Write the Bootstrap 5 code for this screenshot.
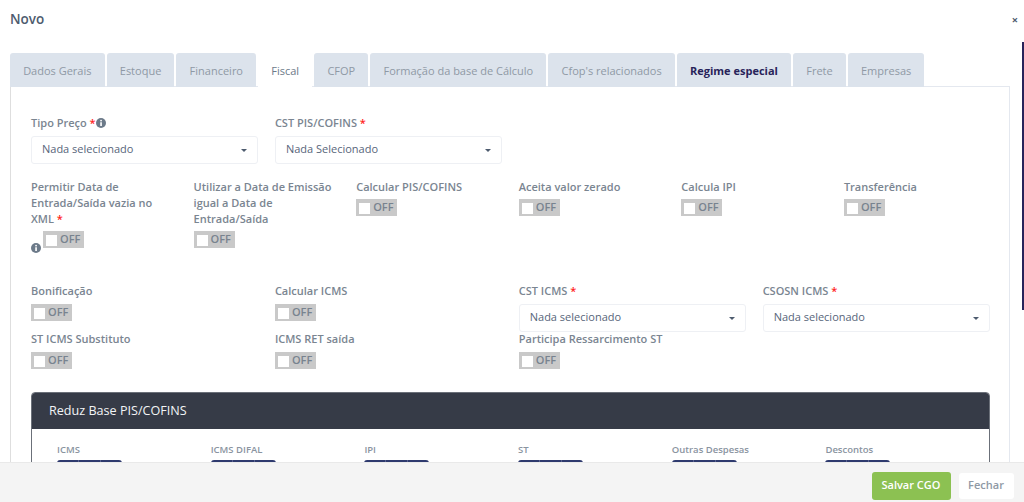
<!DOCTYPE html>
<html lang="pt">
<head>
<meta charset="utf-8">
<link rel="stylesheet" href="https://cdn.jsdelivr.net/npm/bootstrap@5.3.0/dist/css/bootstrap.min.css">
<style>
html,body{height:100%;overflow:hidden}
body{font-family:"Open Sans",sans-serif;font-size:11px;color:#6c7a89;background:#fff}
.shell{height:502px;display:flex;flex-direction:column}
.topbar{height:53px;flex:none;padding:10px 6px 0 10px;display:flex;justify-content:space-between;align-items:flex-start}
.ttl{font-size:13.5px;font-weight:600;color:#4d5b6e;line-height:19px}
.shut{font-size:11px;font-weight:700;color:#4d5b6e;line-height:19px}
.scrollarea{flex:1 1 auto;min-height:0;overflow:hidden;padding:0 14px 0 10px}
.tabrow{gap:2px;border:0;height:34px;flex-wrap:nowrap}
.tabrow .nav-link{height:34px;border:0;border-radius:3px 3px 0 0;background:#dce3ec;color:#8f99a5;padding:0 13.15px;line-height:35px;font-size:11px;white-space:nowrap}
.tabrow .nav-link.active{background:#fff;color:#6c7a89;position:relative;z-index:2}
.tabrow .nav-link.strong{font-weight:700;color:#28235a}
.pane{border:1px solid #e4e8ef;border-left-color:#dedede;margin-top:-1px;padding:28px 19px 0 20px;height:500px}
.gridrow{--bs-gutter-x:17px;width:975.5px}
.lbl{display:block;line-height:16px;margin-bottom:5px;color:#7a8591;font-weight:600;font-size:11px}
.req{color:#f22;font-weight:600}
.info{display:inline-block;width:10px;height:10px;vertical-align:-1px}
.drop{height:28px;border:1px solid #eef0f4;border-radius:3px;padding:0 10px 2px 10px;display:flex;justify-content:space-between;align-items:center;color:#57657a;font-size:11px}
.drop::after{content:"";border:3.5px solid transparent;border-top-color:#4d5b6e;border-bottom:0;margin-top:2px}
.sw{display:inline-flex;align-items:center;width:41px;height:17px;background:#c9c9c9;padding:0 3px;color:#78838f;font-weight:600;font-size:11px;line-height:14px;vertical-align:top;flex:none}
.sw::before{content:"";width:11px;height:11px;background:#fff;margin:1px 3px 0 0;flex:none}
.sw span{margin-top:-2px}
.r1{margin-top:15px;height:104px}
.r1 .lbl{margin-bottom:4px}
.r2{height:48px}
.r3{height:61px}
.infogap{margin-top:12px;margin-right:2px}
.panel{width:959px;border:1px solid #6b7079;border-radius:4px 4px 0 0;height:120px}
.panelhead{height:36px;background:#363b47;color:#f2f4f6;padding:0 17px;line-height:36px;font-size:12.6px;font-weight:400;border-radius:3px 3px 0 0}
.panelbody{padding:14px 0 0 25px}
.cell{width:153.7px;flex:none}
.cell label{display:block;font-size:9.5px;font-weight:600;color:#8a949f;line-height:14px;margin-bottom:3px}
.stepper{width:65px;height:20px;background:#2e3a6e;border-radius:3px;display:flex}
.stepper i{flex:1;border-right:1px solid #5a6390}
.bottombar{height:40px;flex:none;background:#f4f4f4;border-top:1px solid #e9e9e9;display:flex;justify-content:flex-end;align-items:center;gap:7px;padding:6px 10.5px 0 0;position:relative;z-index:3}
.btn-save{background:#8cc152;border:0;color:#fff;font-size:11px;font-weight:600;height:28px;width:79px;padding:0;border-radius:3px;margin-right:1px}
.btn-close-txt{background:#fff;border:0;color:#8f99a5;font-size:11px;font-weight:600;height:26px;width:55px;padding:0;border-radius:3px}
.rail{position:absolute;right:0;top:42px;width:2px;height:268px;background:#28235a}
</style>
</head>
<body>
<div class="shell position-relative">
  <div class="rail"></div>
  <div class="topbar"><div class="ttl">Novo</div><div class="shut">×</div></div>
  <div class="scrollarea">
    <ul class="nav nav-tabs tabrow">
      <li class="nav-item"><a class="nav-link" href="#">Dados Gerais</a></li>
      <li class="nav-item"><a class="nav-link" href="#">Estoque</a></li>
      <li class="nav-item"><a class="nav-link" href="#">Financeiro</a></li>
      <li class="nav-item"><a class="nav-link active" href="#">Fiscal</a></li>
      <li class="nav-item"><a class="nav-link" href="#">CFOP</a></li>
      <li class="nav-item"><a class="nav-link" href="#">Formação da base de Cálculo</a></li>
      <li class="nav-item"><a class="nav-link" href="#">Cfop's relacionados</a></li>
      <li class="nav-item"><a class="nav-link strong" href="#">Regime especial</a></li>
      <li class="nav-item"><a class="nav-link" href="#">Frete</a></li>
      <li class="nav-item"><a class="nav-link" href="#">Empresas</a></li>
    </ul>
    <div class="pane">
      <div class="row gridrow">
        <div class="col-3"><span class="lbl">Tipo Preço <span class="req">*</span><svg class="info" viewBox="0 0 16 16"><circle cx="8" cy="8" r="8" fill="#6c7a89"/><rect x="6.8" y="6.8" width="2.6" height="6" fill="#fff"/><rect x="6.8" y="3" width="2.6" height="2.4" fill="#fff"/></svg></span><div class="drop">Nada selecionado</div></div>
        <div class="col-3"><span class="lbl">CST PIS/COFINS <span class="req">*</span></span><div class="drop">Nada Selecionado</div></div>
      </div>
      <div class="row gridrow r1">
        <div class="col-2"><span class="lbl">Permitir Data de Entrada/Saída vazia no XML <span class="req">*</span></span><div class="d-flex align-items-start"><svg class="info infogap" viewBox="0 0 16 16"><circle cx="8" cy="8" r="8" fill="#6c7a89"/><rect x="6.8" y="6.8" width="2.6" height="6" fill="#fff"/><rect x="6.8" y="3" width="2.6" height="2.4" fill="#fff"/></svg><span class="sw"><span>OFF</span></span></div></div>
        <div class="col-2"><span class="lbl">Utilizar a Data de Emissão igual a Data de Entrada/Saída</span><span class="sw"><span>OFF</span></span></div>
        <div class="col-2"><span class="lbl">Calcular PIS/COFINS</span><span class="sw"><span>OFF</span></span></div>
        <div class="col-2"><span class="lbl">Aceita valor zerado</span><span class="sw"><span>OFF</span></span></div>
        <div class="col-2"><span class="lbl">Calcula IPI</span><span class="sw"><span>OFF</span></span></div>
        <div class="col-2"><span class="lbl">Transferência</span><span class="sw"><span>OFF</span></span></div>
      </div>
      <div class="row gridrow r2">
        <div class="col-3"><span class="lbl">Bonificação</span><span class="sw"><span>OFF</span></span></div>
        <div class="col-3"><span class="lbl">Calcular ICMS</span><span class="sw"><span>OFF</span></span></div>
        <div class="col-3"><span class="lbl">CST ICMS <span class="req">*</span></span><div class="drop">Nada selecionado</div></div>
        <div class="col-3"><span class="lbl">CSOSN ICMS <span class="req">*</span></span><div class="drop">Nada selecionado</div></div>
      </div>
      <div class="row gridrow r3">
        <div class="col-3"><span class="lbl">ST ICMS Substituto</span><span class="sw"><span>OFF</span></span></div>
        <div class="col-3"><span class="lbl">ICMS RET saída</span><span class="sw"><span>OFF</span></span></div>
        <div class="col-3"><span class="lbl">Participa Ressarcimento ST</span><span class="sw"><span>OFF</span></span></div>
      </div>
      <div class="panel">
        <div class="panelhead">Reduz Base PIS/COFINS</div>
        <div class="panelbody d-flex">
          <div class="cell"><label>ICMS</label><div class="stepper"><i></i><i></i><i class="border-0"></i></div></div>
          <div class="cell"><label>ICMS DIFAL</label><div class="stepper"><i></i><i></i><i class="border-0"></i></div></div>
          <div class="cell"><label>IPI</label><div class="stepper"><i></i><i></i><i class="border-0"></i></div></div>
          <div class="cell"><label>ST</label><div class="stepper"><i></i><i></i><i class="border-0"></i></div></div>
          <div class="cell"><label>Outras Despesas</label><div class="stepper"><i></i><i></i><i class="border-0"></i></div></div>
          <div class="cell"><label>Descontos</label><div class="stepper"><i></i><i></i><i class="border-0"></i></div></div>
        </div>
      </div>
    </div>
  </div>
  <div class="bottombar"><button class="btn btn-save">Salvar CGO</button><button class="btn btn-close-txt">Fechar</button></div>
</div>
<script src="https://cdn.jsdelivr.net/npm/bootstrap@5.3.0/dist/js/bootstrap.bundle.min.js"></script>
</body>
</html>
